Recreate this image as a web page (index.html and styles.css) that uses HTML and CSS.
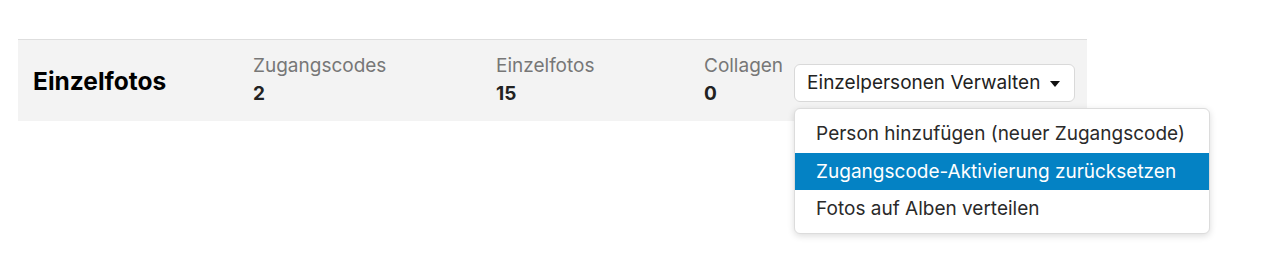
FILE: index.html
```html
<!DOCTYPE html>
<html lang="de">
<head>
<meta charset="utf-8">
<title>Einzelfotos</title>
<link rel="stylesheet" href="styles.css">
</head>
<body>
<div class="wrap">
  <section class="panel">
    <h2 class="title">Einzelfotos</h2>
    <div class="stat stat-codes">
      <div class="stat-label">Zugangscodes</div>
      <div class="stat-value">2</div>
    </div>
    <div class="stat stat-fotos">
      <div class="stat-label">Einzelfotos</div>
      <div class="stat-value">15</div>
    </div>
    <div class="stat stat-collagen">
      <div class="stat-label">Collagen</div>
      <div class="stat-value">0</div>
    </div>
    <div class="menu">
      <button class="menu-btn" type="button">Einzelpersonen Verwalten<span class="caret"></span></button>
      <ul class="menu-list">
        <li class="menu-item">Person hinzufügen (neuer Zugangscode)</li>
        <li class="menu-item active">Zugangscode-Aktivierung zurücksetzen</li>
        <li class="menu-item">Fotos auf Alben verteilen</li>
      </ul>
    </div>
  </section>
</div>
</body>
</html>
```
FILE: styles.css
```css
html, body {
  margin: 0;
  padding: 0;
  background: #ffffff;
}

body {
  margin: 8px;
  min-height: 244px;
  font-family: Inter, "Noto Sans", "Liberation Sans", sans-serif;
  color: #222222;
}

.wrap {
  padding: 31px 0 0 10px;
}

.panel {
  width: 1069px;
  box-sizing: border-box;
  display: flex;
  align-items: flex-start;
  background: #f3f3f3;
  border-top: 1px solid #dedede;
  padding: 12px 0 13px 15px;
}

.title {
  align-self: center;
  margin: 2px 0 0 0;
  width: 220px;
  flex: none;
  font-size: 24.5px;
  font-weight: 700;
  color: #000000;
  line-height: normal;
}

.stat {
  flex: none;
  font-size: 19px;
  line-height: 28px;
}

.stat-codes { width: 243px; }
.stat-fotos { width: 208px; }
.stat-collagen { margin-right: 11px; }

.stat-label {
  color: #777777;
}

.stat-value {
  font-weight: 700;
  color: #222222;
}

.menu {
  position: relative;
  margin-top: 12px;
}

.menu-btn {
  display: flex;
  align-items: center;
  height: 38px;
  box-sizing: border-box;
  padding: 0 14px 0 12px;
  background: #ffffff;
  border: 1px solid #d9d9d9;
  border-radius: 6px;
  font-family: inherit;
  font-size: 19px;
  line-height: 20px;
  color: #222222;
  cursor: pointer;
}

.caret {
  display: inline-block;
  width: 0;
  height: 0;
  margin-left: 10px;
  margin-top: 2px;
  border-left: 5px solid transparent;
  border-right: 5px solid transparent;
  border-top: 6px solid #111111;
}

.menu-list {
  position: absolute;
  top: 44px;
  left: 0;
  z-index: 5;
  margin: 0;
  padding: 6px 0 5px;
  list-style: none;
  background: #ffffff;
  border: 1px solid #dcdcdc;
  border-radius: 6px;
  box-shadow: 0 2px 7px rgba(0, 0, 0, 0.14);
  white-space: nowrap;
}

.menu-item {
  padding: 6px 24px 6px 21px;
  font-size: 19px;
  line-height: 25.5px;
  color: #2a2a2a;
}

.menu-item.active {
  background: #0482c4;
  color: #ffffff;
}
```
